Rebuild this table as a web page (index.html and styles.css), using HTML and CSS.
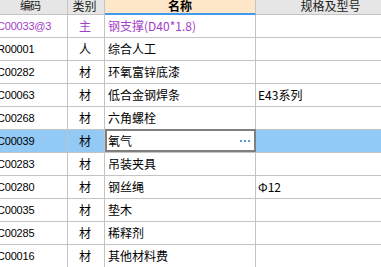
FILE: index.html
```html
<!DOCTYPE html>
<html lang="zh-CN">
<head>
<meta charset="utf-8">
<title>材料明细</title>
<link rel="stylesheet" href="styles.css">
</head>
<body>
<div class="grid">
  <div class="row head">
    <div class="cell code">编码</div>
    <div class="cell type">类别</div>
    <div class="cell name active-col">名称</div>
    <div class="cell spec">规格及型号</div>
  </div>
  <div class="row main">
    <div class="cell code">C00033@3</div>
    <div class="cell type">主</div>
    <div class="cell name">钢支撑(D40*1.8)</div>
    <div class="cell spec"></div>
  </div>
  <div class="row">
    <div class="cell code">R00001</div>
    <div class="cell type">人</div>
    <div class="cell name">综合人工</div>
    <div class="cell spec"></div>
  </div>
  <div class="row">
    <div class="cell code">C00282</div>
    <div class="cell type">材</div>
    <div class="cell name">环氧富锌底漆</div>
    <div class="cell spec"></div>
  </div>
  <div class="row">
    <div class="cell code">C00063</div>
    <div class="cell type">材</div>
    <div class="cell name">低合金钢焊条</div>
    <div class="cell spec">E43系列</div>
  </div>
  <div class="row">
    <div class="cell code">C00268</div>
    <div class="cell type">材</div>
    <div class="cell name">六角螺栓</div>
    <div class="cell spec"></div>
  </div>
  <div class="row selected">
    <div class="cell code">C00039</div>
    <div class="cell type">材</div>
    <div class="cell name editing">氧气<span class="more"><i></i><i></i><i></i></span></div>
    <div class="cell spec"></div>
  </div>
  <div class="row">
    <div class="cell code">C00283</div>
    <div class="cell type">材</div>
    <div class="cell name">吊装夹具</div>
    <div class="cell spec"></div>
  </div>
  <div class="row">
    <div class="cell code">C00280</div>
    <div class="cell type">材</div>
    <div class="cell name">钢丝绳</div>
    <div class="cell spec">Φ12</div>
  </div>
  <div class="row">
    <div class="cell code">C00035</div>
    <div class="cell type">材</div>
    <div class="cell name">垫木</div>
    <div class="cell spec"></div>
  </div>
  <div class="row">
    <div class="cell code">C00285</div>
    <div class="cell type">材</div>
    <div class="cell name">稀释剂</div>
    <div class="cell spec"></div>
  </div>
  <div class="row">
    <div class="cell code">C00016</div>
    <div class="cell type">材</div>
    <div class="cell name">其他材料费</div>
    <div class="cell spec"></div>
  </div>
</div>
</body>
</html>
```
FILE: styles.css
```css
html, body {
  margin: 0;
  padding: 0;
  background: #ffffff;
  overflow: hidden;
}

body {
  width: 381px;
  height: 267px;
  font-family: "Noto Sans CJK SC", "Noto Sans", sans-serif;
  font-size: 12px;
  color: #000000;
}

/* the grid is scrolled a little left and up inside its viewport */
.grid {
  margin: -4px 0 0 -6px;
  width: 420px;
}

.row {
  display: flex;
  height: 23px;
}

.cell {
  box-sizing: border-box;
  height: 100%;
  border-right: 1px solid #c4c4c4;
  border-bottom: 1px solid #c4c4c4;
  display: flex;
  align-items: center;
  white-space: nowrap;
  overflow: hidden;
  line-height: 1;
}

.code {
  width: 74px;
  padding-left: 3px;
  font-family: "Liberation Sans", Arial, sans-serif;
  font-size: 11px;
  letter-spacing: -0.2px;
}

.type {
  width: 37px;
  justify-content: center;
  padding-right: 2px;
}

.name {
  width: 151px;
  padding-left: 3px;
}

.spec {
  width: 150px;
  padding-left: 2px;
}

/* header */
.head {
  height: 19px;
}

.head .cell {
  background: #e6e6e6;
  justify-content: center;
  padding: 2px 0 0 0;
  color: #1a1a1a;
}

.head .type {
  padding-right: 3px;
}

.head .active-col {
  background: #fee6c9;
  border-bottom: 2px solid #4499ee;
  font-weight: bold;
  color: #000000;
}

/* main material row */
.main .cell {
  color: #a33ec6;
}

/* selected row */
.selected .cell {
  background: #92c9f5;
}

.selected .editing {
  position: relative;
  background: #ffffff;
  overflow: visible;
}

.selected .editing::after {
  content: "";
  position: absolute;
  left: 0;
  right: -1px;
  top: -1px;
  bottom: 0;
  border: 2px solid #7f7f7f;
  pointer-events: none;
}

.more {
  position: absolute;
  right: 5px;
  top: 10px;
  display: flex;
  gap: 2px;
}

.more i {
  width: 2px;
  height: 2px;
  background: #5b9bd5;
}
```
